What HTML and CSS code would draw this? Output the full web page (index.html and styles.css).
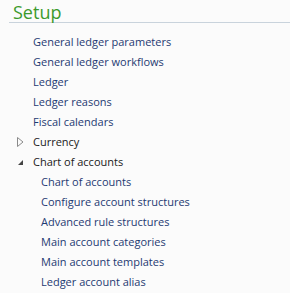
FILE: index.html
```html
<!DOCTYPE HTML>
<html lang="en">
    <head>
        <meta charset="UTF-8">
        <title>Setup</title>
        <link rel="stylesheet" href="styles.css">
    </head>
    <body>
        <div class="panel">
            <h2 class="title">Setup</h2>
            <ul class="menu">
                <li class="link">General ledger parameters</li>
                <li class="link">General ledger workflows</li>
                <li class="link">Ledger</li>
                <li class="link">Ledger reasons</li>
                <li class="link">Fiscal calendars</li>
                <li class="group">
                    <span class="arrow">
                        <svg width="7" height="10" viewBox="0 0 7 10"><path d="M0.5 0.5 L6 5 L0.5 9.5 Z" fill="none" stroke="#8a8a8a" stroke-width="1"/></svg>
                    </span>
                    Currency
                </li>
                <li class="group">
                    <span class="arrow">
                        <svg width="7" height="10" viewBox="0 0 7 10"><path d="M6 3 L6 8 L1 8 Z" fill="#444"/></svg>
                    </span>
                    Chart of accounts
                </li>
                <li class="link sub">Chart of accounts</li>
                <li class="link sub">Configure account structures</li>
                <li class="link sub">Advanced rule structures</li>
                <li class="link sub">Main account categories</li>
                <li class="link sub">Main account templates</li>
                <li class="link sub">Ledger account alias</li>
            </ul>
        </div>
    </body>
</html>
```
FILE: styles.css
```css
body {
    margin: 0;
    background: #fbfbfb;
    font-family: "Open Sans", "Noto Sans", sans-serif;
}
.panel {
    padding-left: 9px;
}
.title {
    margin: 0;
    padding: 0 0 0 4px;
    height: 22px;
    line-height: 24px;
    font-size: 18px;
    font-weight: normal;
    color: #3b9a2c;
    border-bottom: 1px solid #c9d3dc;
}
.menu {
    list-style: none;
    margin: 0;
    padding: 9px 0 0 0;
}
.menu li {
    height: 20px;
    line-height: 20px;
    font-size: 11px;
    padding-left: 24px;
    display: flex;
    align-items: center;
}
.link {
    color: #1e3a72;
}
.group {
    color: #1a1a1a;
}
.menu .sub {
    padding-left: 32px;
}
.menu .group {
    padding-left: 8px;
}
.arrow {
    width: 16px;
    display: flex;
    align-items: center;
}
```
